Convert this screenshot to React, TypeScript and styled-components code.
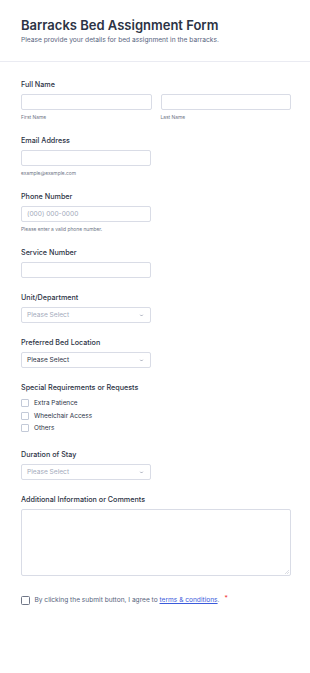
import * as React from 'react';
import styled, { createGlobalStyle } from 'styled-components';

const GlobalStyle = createGlobalStyle`
	html, body {
		margin: 0;
		padding: 0;
		background: #ffffff;
	}
	body {
		font-family: Inter, "Noto Sans", "Liberation Sans", sans-serif;
		color: #2c3345;
	}
	* {
		box-sizing: border-box;
	}
`;

const Page = styled.div`
	width: 310px;
	min-height: 673px;
	background: #ffffff;
`;

const Header = styled.div`
	padding: 17px 21px 16px;
	border-bottom: 1px solid #eaebf2;
`;

const Title = styled.h1`
	margin: 0;
	font-size: 13px;
	line-height: 16px;
	font-weight: 600;
	color: #2c3345;
`;

const Subtitle = styled.p`
	margin: 3px 0 0;
	font-size: 6.65px;
	line-height: 9px;
	color: #57647e;
`;

const Body = styled.div`
	padding: 18px 19px 0 21px;
	display: flex;
	flex-direction: column;
	gap: 15px;
`;

const Field = styled.div`
	display: flex;
	flex-direction: column;
`;

const Label = styled.label`
	font-size: 7.2px;
	line-height: 10px;
	font-weight: 500;
	color: #2c3345;
	margin-bottom: 4px;
`;

const Row = styled.div`
	display: flex;
	gap: 9px;
`;

const Col = styled.div`
	flex: 1;
	display: flex;
	flex-direction: column;
`;

const Input = styled.input<{ $narrow?: boolean }>`
	width: ${(p) => (p.$narrow ? '130px' : '100%')};
	height: 16px;
	padding: 0 5px;
	border: 1px solid #d9dce6;
	border-radius: 2px;
	font-family: inherit;
	font-size: 6.6px;
	color: #2c3345;
	background: #ffffff;
	outline: none;

	&::placeholder {
		color: #a3aabb;
	}
`;

const Sublabel = styled.span`
	margin-top: 4px;
	font-size: 4.9px;
	line-height: 7px;
	color: #6f7687;
`;

const Select = styled.div<{ $filled?: boolean }>`
	width: 130px;
	height: 16px;
	padding: 0 5px;
	border: 1px solid #d9dce6;
	border-radius: 2px;
	display: flex;
	align-items: center;
	justify-content: space-between;
	font-size: 6.6px;
	color: ${(p) => (p.$filled ? '#2c3345' : '#a3aabb')};
`;

const Chevron = styled.svg`
	width: 5px;
	height: 5px;
	margin-right: 1px;
`;

const CheckGroup = styled.div`
	display: flex;
	flex-direction: column;
	gap: 4.5px;
	margin-top: 2px;
	margin-bottom: 3px;
`;

const CheckItem = styled.label`
	display: flex;
	align-items: center;
	gap: 5px;
	font-size: 6.4px;
	line-height: 8px;
	color: #2c3345;
`;

const Box = styled.span`
	width: 8px;
	height: 8px;
	border: 1px solid #c3cad8;
	border-radius: 1px;
	background: #ffffff;
`;

const TextArea = styled.div`
	width: 100%;
	height: 67px;
	border: 1px solid #d9dce6;
	border-radius: 2px;
	position: relative;
`;

const Grip = styled.svg`
	position: absolute;
	right: 1px;
	bottom: 1px;
	width: 4px;
	height: 4px;
`;

const Terms = styled.div`
	margin-top: 5px;
	display: flex;
	align-items: center;
	gap: 5px;
	font-size: 6.6px;
	color: #57647e;
`;

const TermsBox = styled.span`
	width: 8.5px;
	height: 8.5px;
	border: 1px solid #6f7687;
	border-radius: 1.5px;
	flex-shrink: 0;
`;

const TermsLink = styled.a`
	color: #3b5bdb;
	text-decoration: underline;
`;

const Required = styled.span`
	color: #f23a3c;
	margin-left: 5px;
	position: relative;
	top: -2px;
`;

const ChevronIcon = () => (
	<Chevron viewBox="0 0 10 10">
		<path d="M2.5 3.5 L5 6 L7.5 3.5" fill="none" stroke="#8b93a6" strokeWidth="1.6" />
	</Chevron>
);

const Dropdown = ({ filled }: { filled?: boolean }) => (
	<Select $filled={filled}>
		<span>Please Select</span>
		<ChevronIcon />
	</Select>
);

export default function App() {
	return (
		<Page>
			<GlobalStyle />
			<Header>
				<Title>Barracks Bed Assignment Form</Title>
				<Subtitle>Please provide your details for bed assignment in the barracks.</Subtitle>
			</Header>
			<Body>
				<Field>
					<Label>Full Name</Label>
					<Row>
						<Col>
							<Input />
							<Sublabel>First Name</Sublabel>
						</Col>
						<Col>
							<Input />
							<Sublabel>Last Name</Sublabel>
						</Col>
					</Row>
				</Field>
				<Field>
					<Label>Email Address</Label>
					<Input $narrow />
					<Sublabel>example@example.com</Sublabel>
				</Field>
				<Field>
					<Label>Phone Number</Label>
					<Input $narrow placeholder="(000) 000-0000" />
					<Sublabel>Please enter a valid phone number.</Sublabel>
				</Field>
				<Field>
					<Label>Service Number</Label>
					<Input $narrow />
				</Field>
				<Field>
					<Label>Unit/Department</Label>
					<Dropdown />
				</Field>
				<Field>
					<Label>Preferred Bed Location</Label>
					<Dropdown filled />
				</Field>
				<Field>
					<Label>Special Requirements or Requests</Label>
					<CheckGroup>
						<CheckItem><Box />Extra Patience</CheckItem>
						<CheckItem><Box />Wheelchair Access</CheckItem>
						<CheckItem><Box />Others</CheckItem>
					</CheckGroup>
				</Field>
				<Field>
					<Label>Duration of Stay</Label>
					<Dropdown />
				</Field>
				<Field>
					<Label>Additional Information or Comments</Label>
					<TextArea>
						<Grip viewBox="0 0 4 4">
							<path d="M4 0 L0 4 M4 2 L2 4" stroke="#b8bdc9" strokeWidth="0.5" />
						</Grip>
					</TextArea>
				</Field>
				<Terms>
					<TermsBox />
					<span>
						By clicking the submit button, I agree to <TermsLink href="#">terms &amp; conditions</TermsLink>.
						<Required>*</Required>
					</span>
				</Terms>
			</Body>
		</Page>
	);
}
